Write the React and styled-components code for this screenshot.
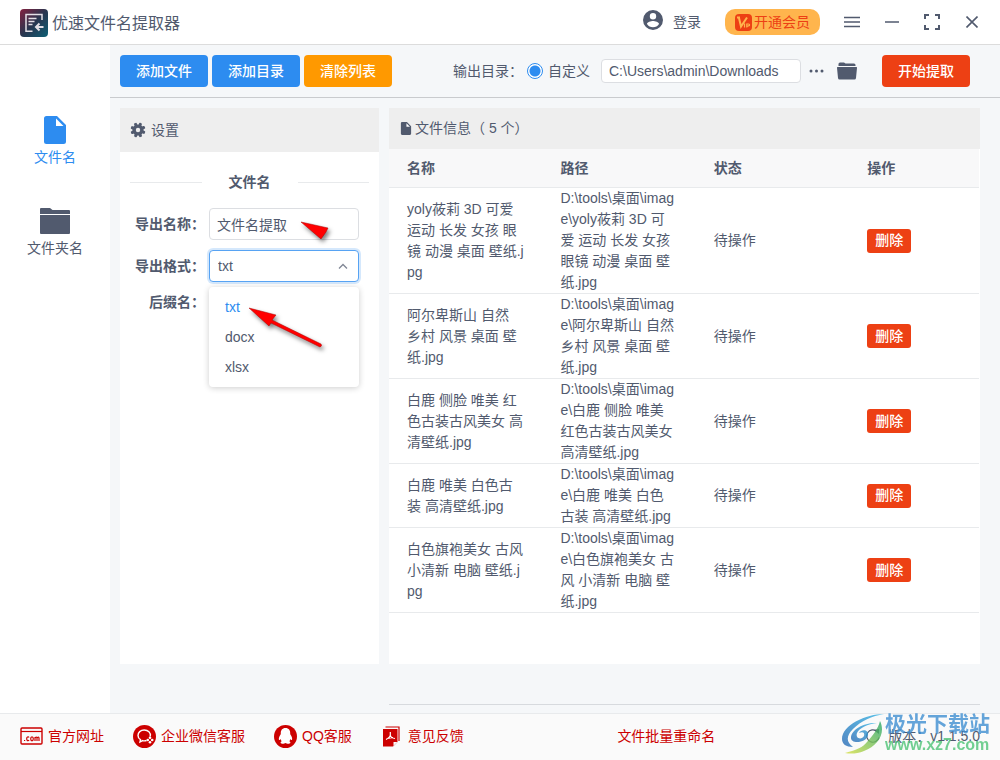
import React, { useState } from "react";
import styled, { createGlobalStyle } from "styled-components";

const GlobalStyle = createGlobalStyle`
  *, *::before, *::after { box-sizing: border-box; }
  body {
    margin: 0;
    background: #f5f7f9;
    color: #515a6e;
    font: 14px/21px "Liberation Sans", "Noto Sans CJK SC", sans-serif;
  }
  button, input, select { font: inherit; color: inherit; }
  button { cursor: pointer; }
  svg { display: block; flex: none; }
`;

const Page = styled.div`
  display: flex;
  flex-direction: column;
  min-height: 100vh;
`;

const TitleBar = styled.header`
  display: flex;
  align-items: center;
  justify-content: space-between;
  height: 45px;
  padding: 0 8px 0 20px;
  background: #fff;
  border-bottom: 1px solid #dcdcdc;
`;

const Brand = styled.h1`
  display: flex;
  align-items: center;
  gap: 4px;
  margin: 0;
  padding-top: 2px;
  font-size: 16px;
  font-weight: 400;
`;

const TitleActions = styled.div`
  display: flex;
  align-items: center;
`;

const IconButton = styled.button`
  display: flex;
  align-items: center;
  justify-content: center;
  width: ${(p) => p.$width || 40}px;
  height: 26px;
  padding: 0;
  border: 0;
  background: none;
`;

const LoginButton = styled.button`
  display: flex;
  align-items: center;
  gap: 10px;
  margin-right: 24px;
  padding: 0;
  border: 0;
  background: none;

  svg { margin-bottom: 4px; }
`;

const VipButton = styled.button`
  display: flex;
  align-items: center;
  gap: 2px;
  height: 26px;
  margin-right: 12px;
  padding: 0 10px;
  border: 0;
  border-radius: 10px;
  background: #ffb54d;
  color: #ed4014;
`;

const Body = styled.div`
  display: flex;
  flex: 1;
`;

const Sidebar = styled.nav`
  display: flex;
  flex-direction: column;
  gap: 39px;
  flex: none;
  width: 110px;
  padding-top: 71px;
  background: #fff;
`;

const NavItem = styled.a`
  display: flex;
  flex-direction: column;
  align-items: center;
  gap: 3px;
  color: ${(p) => (p.$active ? "#2d8cf0" : "#515a6e")};
  text-decoration: none;
`;

const Workspace = styled.div`
  display: flex;
  flex-direction: column;
  flex: 1;
  min-width: 0;
`;

const Toolbar = styled.div`
  display: flex;
  align-items: center;
  justify-content: space-between;
  height: 53px;
  padding: 0 30px 0 10px;
  border-bottom: 1px solid #c9cbce;
`;

const ToolGroup = styled.div`
  display: flex;
  align-items: center;
  gap: 4px;
`;

const Button = styled.button`
  height: 32px;
  padding: 0 16px;
  border: 0;
  border-radius: 4px;
  background: ${(p) => p.$color};
  color: #fff;
  font-weight: 500;
`;

const SmallButton = styled(Button)`
  display: block;
  height: 24px;
  padding: 0 8px;
  border-radius: 3px;
`;

const OutputGroup = styled.div`
  display: flex;
  align-items: center;
`;

const RadioLabel = styled.label`
  display: flex;
  align-items: center;
  gap: 5px;
  margin: 0 11px 0 4px;
`;

const Radio = styled.input`
  appearance: none;
  width: 16px;
  height: 16px;
  margin: 0;
  border: 1px solid #2d8cf0;
  border-radius: 50%;
  background: #fff;

  &:checked {
    background: radial-gradient(circle, #2d8cf0 5px, #fff 6px);
  }
`;

const TextInput = styled.input`
  width: ${(p) => p.$width}px;
  height: ${(p) => p.$height}px;
  padding: 0 7px;
  border: 1px solid #dcdee2;
  border-radius: 4px;
  background: #fff;
  outline: 0;
`;

const StartButton = styled(Button)`
  margin-left: 20px;
`;

const Panels = styled.main`
  display: grid;
  grid-template-columns: 259px minmax(0, 1fr);
  gap: 10px;
  flex: 1;
  padding: 10px 20px 0 10px;
`;

const Panel = styled.section`
  background: #fff;
`;

const PanelHeader = styled.h2`
  display: flex;
  align-items: center;
  gap: ${(p) => p.$gap}px;
  height: ${(p) => p.$height}px;
  margin: 0;
  padding: 0 10px;
  background: #eee;
  font-size: 14px;
  font-weight: 400;
`;

const Divider = styled.h3`
  display: flex;
  align-items: center;
  gap: 27px;
  margin: 20px 10px 15px;
  font-size: 14px;
  font-weight: 700;

  &::before, &::after {
    content: "";
    flex: 1;
    height: 1px;
    background: #e8eaec;
  }
`;

const Form = styled.form`
  position: relative;
  display: flex;
  flex-direction: column;
  gap: 10px;
  padding: 0 20px 0 10px;
`;

const Field = styled.div`
  display: flex;
  align-items: center;
  justify-content: space-between;
`;

const FieldLabel = styled.label`
  width: 75px;
  font-weight: 700;
  text-align: right;
`;

const SelectBox = styled.div`
  position: relative;
  width: 150px;
`;

const Select = styled.select`
  display: block;
  appearance: none;
  width: 100%;
  height: 32px;
  padding: 0 8px;
  border: 1px solid #57a3f3;
  border-radius: 4px;
  outline: 0;
  background: #fff;
  box-shadow: 0 0 0 2px rgba(45, 140, 240, 0.2);
`;

const SelectArrow = styled.svg`
  position: absolute;
  top: 12px;
  right: 11px;
  pointer-events: none;
`;

const Menu = styled.ul`
  position: absolute;
  top: 37px;
  left: 0;
  z-index: 1;
  width: 100%;
  margin: 0;
  padding: 5px 0;
  border-radius: 4px;
  background: #fff;
  box-shadow: 0 1px 6px rgba(0, 0, 0, 0.2);
  list-style: none;
`;

const MenuItem = styled.li`
  height: 30px;
  padding: 0 16px;
  line-height: 30px;
  color: ${(p) => (p.$selected ? "#2d8cf0" : "#515a6e")};
`;

const Pointers = styled.svg`
  position: absolute;
  top: 0;
  left: 120px;
  z-index: 2;
  pointer-events: none;
  filter: drop-shadow(2px 3px 2px rgba(0, 0, 0, 0.5));
`;

const TableWrap = styled.div`
  padding-right: 1px;
`;

const Table = styled.table`
  width: 100%;
  border-spacing: 0;
  table-layout: fixed;
  text-align: left;
  word-break: break-all;

  th, td {
    padding: 0 18px;
    border-bottom: 1px solid #e8eaec;
  }
  th {
    height: 39px;
    background: #f8f8f9;
    font-weight: 700;
  }
`;

const BottomRule = styled.hr`
  height: 1px;
  margin: 40px 20px 8px 279px;
  border: 0;
  background: #d7dade;
`;

const Footer = styled.footer`
  position: relative;
  display: flex;
  align-items: center;
  height: 47px;
  padding: 0 20px 2px;
  border-top: 1px solid #e8eaec;
  background: #fafafa;
`;

const FooterLinks = styled.div`
  display: flex;
  gap: 29px;
`;

const FooterLink = styled.a`
  display: flex;
  align-items: center;
  gap: 5px;
  color: #c00;
  text-decoration: none;
`;

const BatchLink = styled(FooterLink)`
  margin-left: 16%;
`;

const Version = styled.span`
  display: flex;
  align-items: center;
  gap: 8px;
  margin-left: auto;
`;

const Watermark = styled.div`
  position: absolute;
  right: 10px;
  bottom: 5px;
  display: flex;
  align-items: center;
  opacity: 0.8;
  pointer-events: none;
`;

const WatermarkText = styled.div`
  display: flex;
  flex-direction: column;
  font-size: ${(p) => p.$size || 16}px;
  font-weight: 700;
  line-height: 22px;
  color: #3f8fd2;

  small { font-size: 16px; line-height: 20px; color: #4fc477; }
`;

const LogoIcon = () => (
  <svg width="28" height="28" viewBox="0 0 28 28">
    <defs>
      <linearGradient id="brand" x1="0" y1="0" x2="1" y2="1">
        <stop offset="0" stopColor="#84203f" />
        <stop offset="0.5" stopColor="#29354f" />
        <stop offset="1" stopColor="#0d6076" />
      </linearGradient>
    </defs>
    <rect width="28" height="28" rx="4" fill="url(#brand)" />
    <g fill="none" stroke="#e3dfe6" strokeWidth="1.5">
      <path d="M22 11V5.500H6v16.800h6.500M8.500 9.500h8M8.500 12.500h6M8.500 15.500h4" />
      <path d="M23.500 18h-7.500M19.500 14.500L16 18l3.500 3.500" strokeWidth="2" />
    </g>
  </svg>
);

const UserIcon = () => (
  <svg width="20" height="20" viewBox="2 2 20 20" fill="#515a6e">
    <path d="M12 2a10 10 0 1 0 0 20 10 10 0 0 0 0-20zm0 3a3.200 3.200 0 1 1 0 6.400A3.200 3.200 0 0 1 12 5zm0 14.200a7.200 7.200 0 0 1-6-3.220c.03-1.990 4-3.080 6-3.080s5.970 1.090 6 3.080a7.200 7.200 0 0 1-6 3.220z" />
  </svg>
);

const VipIcon = () => (
  <svg width="17" height="17" viewBox="0 0 17 17">
    <rect width="17" height="17" rx="4" fill="#ed4014" />
    <g fill="none" stroke="#ffb54d">
      <path d="M2 3.500h3M4 4l2 8.500L12 3.500" strokeWidth="2" />
      <path d="M9.500 9.500V13.500M11.800 13.500V10h1.600q1.400.1 1.100 1.300-.3.900-2.500.7" strokeWidth="1.200" />
    </g>
  </svg>
);

const MenuIcon = () => (
  <svg width="16" height="12" viewBox="0 0 16 12" stroke="#515a6e" strokeWidth="1.500">
    <path d="M0 1.500h16M0 6h16M0 10.500h16" />
  </svg>
);
const MinimizeIcon = () => (
  <svg width="14" height="12" viewBox="0 0 14 12" stroke="#515a6e" strokeWidth="1.500"><path d="M0 6h14" /></svg>
);
const ExpandIcon = () => (
  <svg width="16" height="16" viewBox="0 0 16 16" fill="none" stroke="#515a6e" strokeWidth="2">
    <path d="M1 5V1h4M11 1h4v4M15 11v4h-4M5 15H1v-4" />
  </svg>
);
const CloseIcon = () => (
  <svg width="12" height="12" viewBox="0 0 12 12" stroke="#515a6e" strokeWidth="1.600"><path d="M.5.5l11 11M11.500.5l-11 11" /></svg>
);

const FileIcon = ({ width, height, color }) => (
  <svg width={width} height={height} viewBox="0 0 22 28">
    <path d="M2.500 0H13l9 9v16.500a2.500 2.500 0 0 1-2.500 2.500h-17A2.500 2.500 0 0 1 0 25.500v-23A2.500 2.500 0 0 1 2.500 0z" fill={color} />
    <path d="M12 2.500V10h7.500z" fill="#fff" />
  </svg>
);

const FolderIcon = () => (
  <svg width="30" height="28" viewBox="0 0 30 28" fill="#515a6e">
    <path d="M0 7V2q0-1 1-1h9l2.500 2H29q1 0 1 1v3zM0 8h30v18q0 1-1 1H1q-1 0-1-1z" />
  </svg>
);

const OpenFolderIcon = () => (
  <svg width="20" height="18" viewBox="0 0 20 18" fill="#515a6e">
    <path d="M1.500 4V2Q1.500.5 3 .5h4l1.500 1H17q1.500 0 1.500 1.500v1zM.5 5h19q.5 0 .5.700L19 16q-.2 1.500-1.500 1.500h-15Q1.200 17.500 1 16L0 5.700Q0 5 .5 5z" />
  </svg>
);

const DotsIcon = () => (
  <svg width="15" height="4" viewBox="0 0 15 4" fill="#515a6e">
    <circle cx="2" cy="2" r="1.500" /><circle cx="7.500" cy="2" r="1.500" /><circle cx="13" cy="2" r="1.500" />
  </svg>
);

const GearIcon = () => (
  <svg width="16" height="16" viewBox="0 0 16 16">
    <g fill="#515a6e">
      {[0, 45, 90, 135].map((a) => (
        <rect key={a} x="6.500" y="0.500" width="3" height="15" rx="1" transform={`rotate(${a + 22} 8 8)`} />
      ))}
      <circle cx="8" cy="8" r="5.600" />
    </g>
    <circle cx="8" cy="8" r="2.200" fill="#eee" />
  </svg>
);

const WebsiteIcon = () => (
  <svg width="23" height="18" viewBox="0 0 23 18" fill="none" stroke="#c00">
    <rect x="1" y="1" width="21" height="16" rx="1" strokeWidth="1.400" />
    <path d="M1 4.500h21" strokeWidth="1.200" />
    <path d="M4 13.500h1.200M9 10.500Q8.500 9.500 7.500 10q-.8.400-.8 1.800t.8 1.800q1 .3 1.500-.6M12 9.800q-1.300 0-1.300 2t1.300 2 1.300-2-1.300-2M15 14v-4M15 11q1.800-2 2 0v3M17 11q1.900-2 2 0v3" strokeWidth="1.200" />
  </svg>
);

const WechatIcon = () => (
  <svg width="23" height="23" viewBox="0 0 23 23">
    <circle cx="11.500" cy="11.500" r="11.500" fill="#c00" />
    <g fill="none" stroke="#fff" strokeWidth="1.400">
      <path d="M17.300 11.500C18 7.500 15 5 11.200 5 7.500 5 5 7.500 5 10.400c0 1.900 1 3.300 2.500 4.200L7 17l2.600-1.400q2 .5 4-.1" />
    </g>
    <g fill="#fff"><circle cx="17" cy="12.800" r="1.300" /><circle cx="17" cy="17.200" r="1.300" /><circle cx="14.800" cy="15" r="1.300" /><circle cx="19.200" cy="15" r="1.300" /></g>
  </svg>
);

const QQIcon = () => (
  <svg width="23" height="23" viewBox="0 0 23 23">
    <circle cx="11.500" cy="11.500" r="11.500" fill="#c00" />
    <path d="M11.500 3C8.200 3 6.600 5.400 6.800 8.500c0 1-.6 1.400-1 2.300-.9 1.700-1.300 3.700-.7 4.200.5.300 1-.5 1.400-1 .2 1 .6 1.700 1.300 2.300-1 .4-1.400 1-1.100 1.700.5 1 3.600.9 4.800 0 1.200.9 4.300 1 4.800 0 .3-.7-.1-1.300-1.100-1.700.7-.6 1.100-1.300 1.300-2.300.4.500.9 1.300 1.400 1 .6-.5.200-2.500-.7-4.200-.4-.9-1-1.300-1-2.300C16.400 5.400 14.800 3 11.500 3z" fill="#fff" />
  </svg>
);

const FeedbackIcon = () => (
  <svg width="22" height="21" viewBox="0 0 22 21">
    <path d="M4.500 1H18v14" fill="none" stroke="#c00" strokeWidth="1.200" />
    <path d="M2 3h14.500v13l-4.500 4.500H2z" fill="#c00" />
    <path d="M12.500 20v-4h4z" fill="#fafafa" />
    <path d="M9.300 6v3q-.2 2.500-4.300 4.500M9.300 9q.5 3 4.700 3.500M6.500 12.500l5.500-1" fill="none" stroke="#fff" strokeWidth="1.200" />
  </svg>
);

const RefreshIcon = () => (
  <svg width="14" height="14" viewBox="0 0 14 14">
    <path d="M11 2.300A6.200 6.200 0 1 0 13 8.500" fill="none" stroke="#515a6e" strokeWidth="1.200" />
    <path d="M7.500 1L13 0v5z" fill="#515a6e" />
  </svg>
);

const SwirlIcon = () => (
  <svg width="44" height="42" viewBox="0 0 44 42">
    <defs>
      <linearGradient id="swirlBlue" x1="1" y1="0" x2="0" y2="1">
        <stop offset="0" stopColor="#35b5e5" />
        <stop offset="1" stopColor="#286ab5" />
      </linearGradient>
      <linearGradient id="swirlGreen" x1="1" y1="0" x2="0" y2="1">
        <stop offset="0" stopColor="#24a66b" />
        <stop offset="1" stopColor="#d8e044" />
      </linearGradient>
    </defs>
    <path d="M43 1C25 1 1 12 1 26c0 5 4 8 11 8C5 29 5 23 12 16 20 8 31 3 43 1z" fill="url(#swirlBlue)" />
    <path d="M36 10C24 9 11 16 10 24c-1 8 16 6 17-2 1-6-7-6-9-2 4-2 6 0 5 3-2 4-9 3-7-3 2-5 11-9 20-10z" fill="url(#swirlBlue)" />
    <path d="M39 8c6 12-2 25-16 30-7 3-14 3-19 2 12-3 18-6 22-11 6-7 11-13 13-21z" fill="url(#swirlGreen)" />
  </svg>
);

const files = [
  "yoly莜莉 3D 可爱 运动 长发 女孩 眼镜 动漫 桌面 壁纸.jpg",
  "阿尔卑斯山 自然 乡村 风景 桌面 壁纸.jpg",
  "白鹿 侧脸 唯美 红色古装古风美女 高清壁纸.jpg",
  "白鹿 唯美 白色古装 高清壁纸.jpg",
  "白色旗袍美女 古风 小清新 电脑 壁纸.jpg",
];

const formats = ["txt", "docx", "xlsx"];

export default function App() {
  const [format, setFormat] = useState("txt");

  return (
    <Page>
      <GlobalStyle />
      <TitleBar>
        <Brand><LogoIcon />优速文件名提取器</Brand>
        <TitleActions>
          <LoginButton type="button"><UserIcon />登录</LoginButton>
          <VipButton type="button"><VipIcon />开通会员</VipButton>
          <IconButton type="button" aria-label="菜单"><MenuIcon /></IconButton>
          <IconButton type="button" aria-label="最小化"><MinimizeIcon /></IconButton>
          <IconButton type="button" aria-label="全屏"><ExpandIcon /></IconButton>
          <IconButton type="button" aria-label="关闭"><CloseIcon /></IconButton>
        </TitleActions>
      </TitleBar>

      <Body>
        <Sidebar>
          <NavItem href="#files" $active><FileIcon width={22} height={28} color="#2d8cf0" />文件名</NavItem>
          <NavItem href="#folders"><FolderIcon />文件夹名</NavItem>
        </Sidebar>

        <Workspace>
          <Toolbar>
            <ToolGroup>
              <Button type="button" $color="#2d8cf0">添加文件</Button>
              <Button type="button" $color="#2d8cf0">添加目录</Button>
              <Button type="button" $color="#ff9900">清除列表</Button>
            </ToolGroup>
            <OutputGroup>
              <span>输出目录：</span>
              <RadioLabel>
                <Radio type="radio" name="output" defaultChecked />
                自定义
              </RadioLabel>
              <TextInput $width={200} $height={24} aria-label="输出目录" defaultValue="C:\Users\admin\Downloads" />
              <IconButton type="button" $width={31} aria-label="更多"><DotsIcon /></IconButton>
              <IconButton type="button" $width={30} aria-label="打开目录"><OpenFolderIcon /></IconButton>
              <StartButton type="button" $color="#ed4014">开始提取</StartButton>
            </OutputGroup>
          </Toolbar>

          <Panels>
            <Panel>
              <PanelHeader $height={44} $gap={5}><GearIcon />设置</PanelHeader>
              <Divider>文件名</Divider>
              <Form>
                <Field>
                  <FieldLabel htmlFor="export-name">导出名称：</FieldLabel>
                  <TextInput id="export-name" $width={150} $height={32} defaultValue="文件名提取" />
                </Field>
                <Field>
                  <FieldLabel htmlFor="export-format">导出格式：</FieldLabel>
                  <SelectBox>
                    <Select id="export-format" value={format} onChange={(e) => setFormat(e.target.value)}>
                      {formats.map((f) => <option key={f}>{f}</option>)}
                    </Select>
                    <SelectArrow width="10" height="8" viewBox="0 0 10 8" fill="none" stroke="#808695" strokeWidth="1.300">
                      <path d="M1 6.500l4-4 4 4" />
                    </SelectArrow>
                    <Menu role="listbox" aria-label="导出格式">
                      {formats.map((f) => (
                        <MenuItem key={f} role="option" aria-selected={f === format} $selected={f === format} onClick={() => setFormat(f)}>
                          {f}
                        </MenuItem>
                      ))}
                    </Menu>
                  </SelectBox>
                </Field>
                <Field>
                  <FieldLabel as="span">后缀名：</FieldLabel>
                </Field>
                <Pointers width="100" height="150" viewBox="0 0 100 150" fill="#f00" stroke="#a00" strokeWidth="0.500">
                  <path d="M61 14l27 6-2 4-5 7z" />
                  <path d="M9 100l27 7-4 5 49 24q1.500 2-1 3L31 115l-2 3z" />
                </Pointers>
              </Form>
            </Panel>

            <Panel>
              <PanelHeader $height={41} $gap={2}>
                <FileIcon width={14} height={13} color="#515a6e" />
                文件信息（ 5 个）
              </PanelHeader>
              <TableWrap>
                <Table>
                  <colgroup>
                    <col style={{ width: "26%" }} />
                    <col style={{ width: "26%" }} />
                    <col style={{ width: "26%" }} />
                    <col />
                  </colgroup>
                  <thead>
                    <tr><th>名称</th><th>路径</th><th>状态</th><th>操作</th></tr>
                  </thead>
                  <tbody>
                    {files.map((name) => (
                      <tr key={name}>
                        <td>{name}</td>
                        <td>{"D:\\tools\\桌面\\image\\" + name}</td>
                        <td>待操作</td>
                        <td><SmallButton type="button" $color="#ed4014">删除</SmallButton></td>
                      </tr>
                    ))}
                  </tbody>
                </Table>
              </TableWrap>
            </Panel>
          </Panels>
          <BottomRule />
        </Workspace>
      </Body>

      <Footer>
        <FooterLinks>
          <FooterLink href="#site"><WebsiteIcon />官方网址</FooterLink>
          <FooterLink href="#wechat"><WechatIcon />企业微信客服</FooterLink>
          <FooterLink href="#qq"><QQIcon />QQ客服</FooterLink>
          <FooterLink href="#feedback"><FeedbackIcon />意见反馈</FooterLink>
        </FooterLinks>
        <BatchLink href="#rename">文件批量重命名</BatchLink>
        <Version><RefreshIcon />版本：v1.1.5.0</Version>
        <Watermark>
          <SwirlIcon />
          <WatermarkText $size={21}>
            极光下载站
            <small>www.xz7.com</small>
          </WatermarkText>
        </Watermark>
      </Footer>
    </Page>
  );
}
